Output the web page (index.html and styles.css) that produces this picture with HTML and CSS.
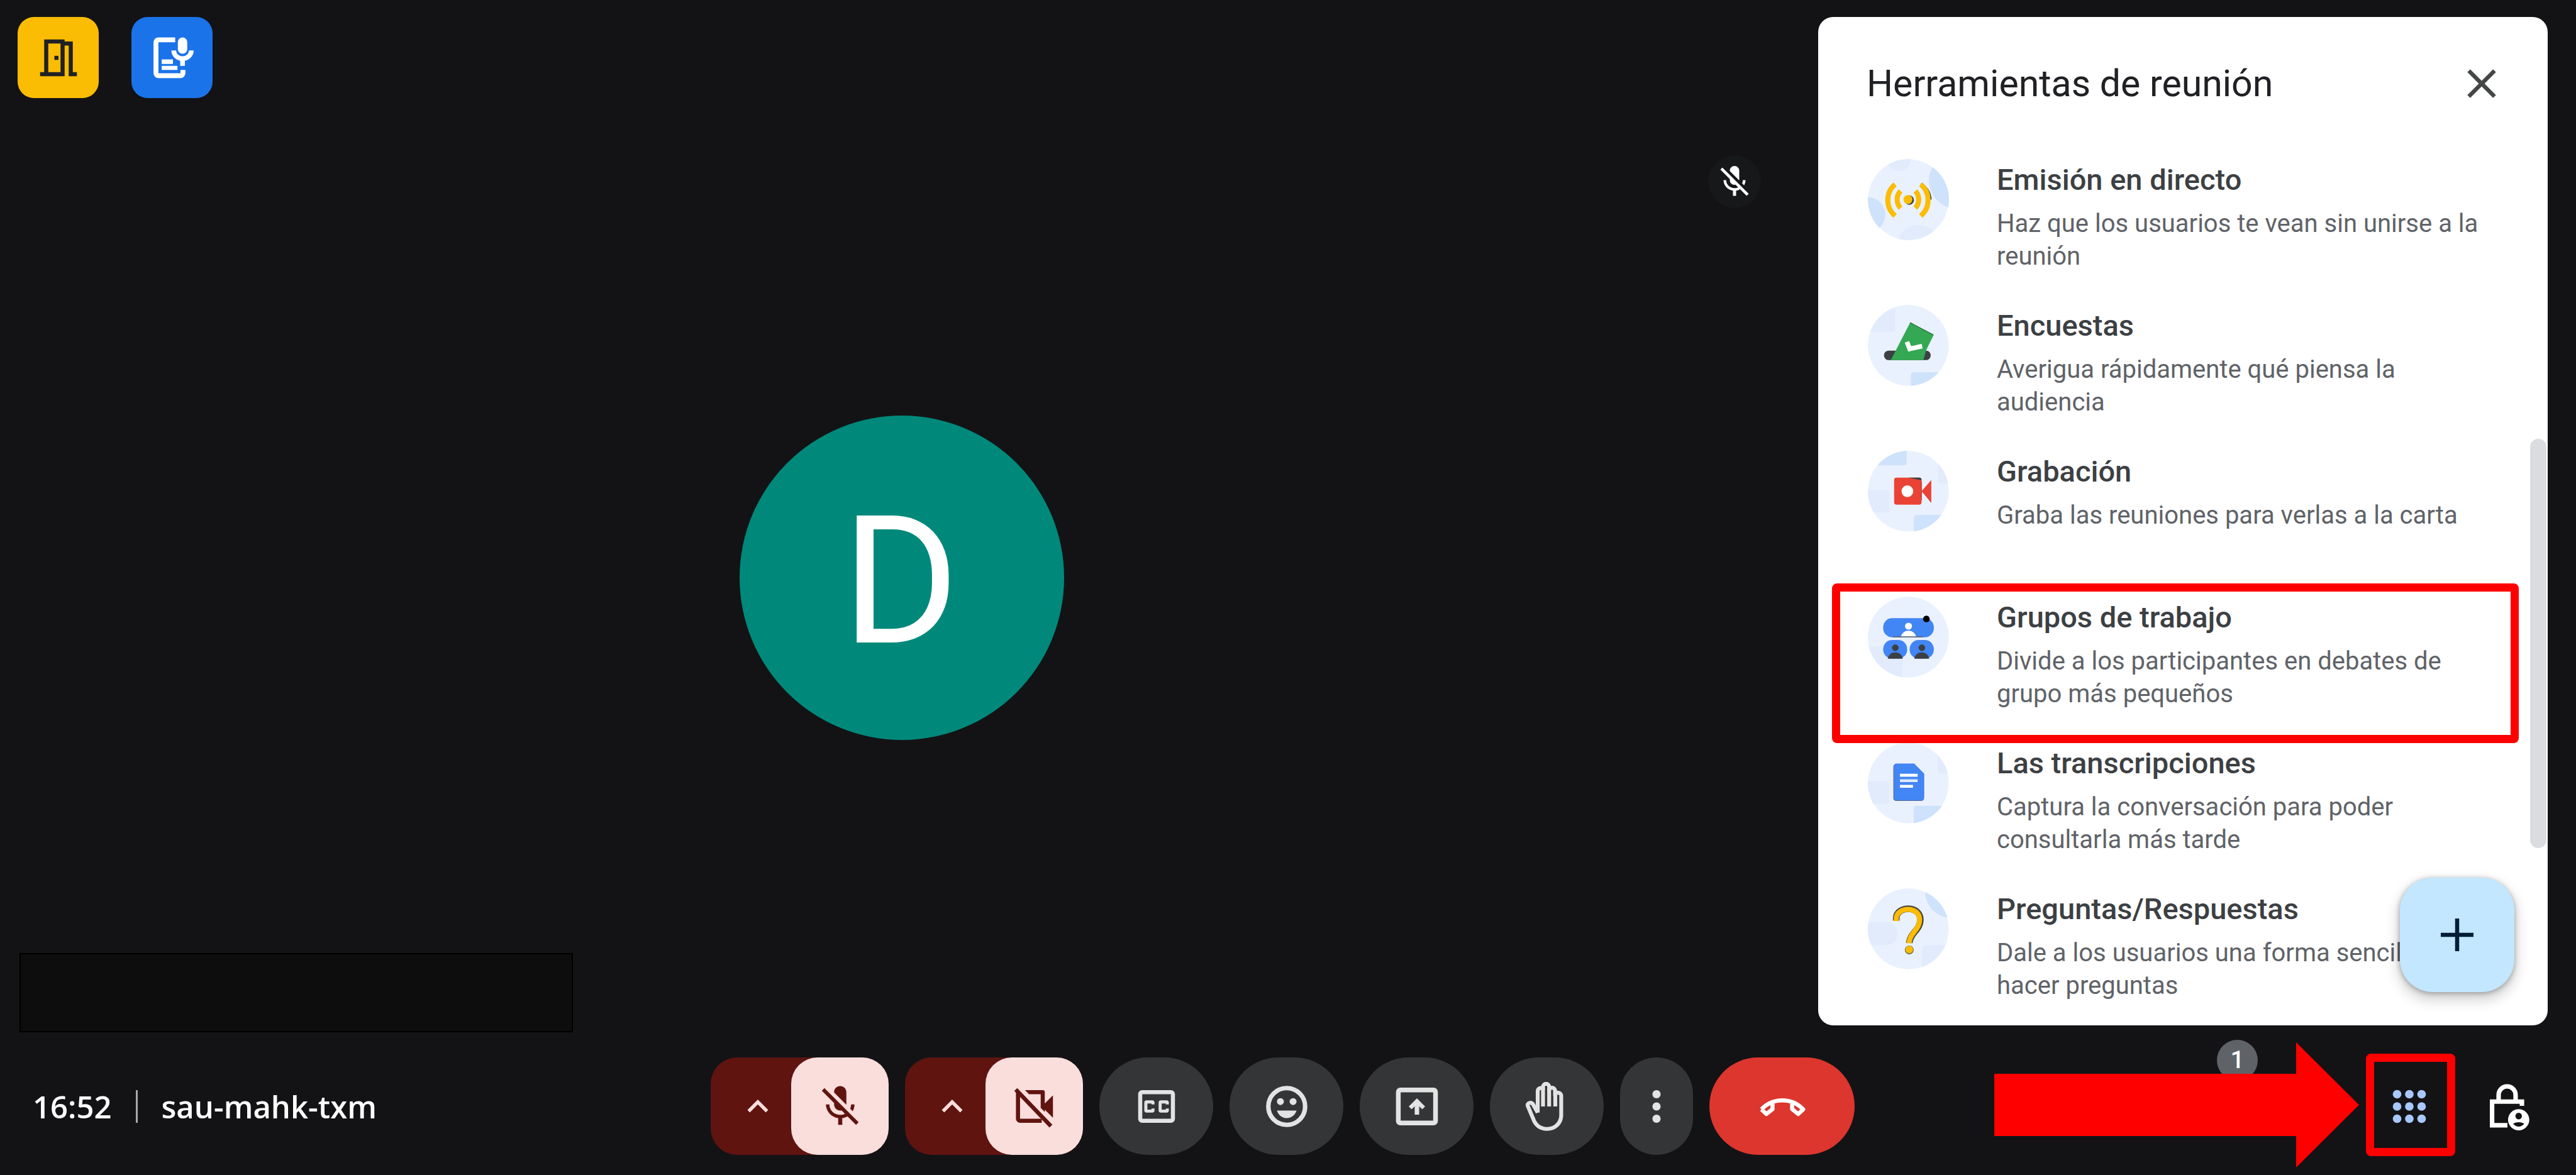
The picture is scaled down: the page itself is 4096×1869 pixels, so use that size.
FILE: index.html
```html
<!DOCTYPE html>
<html lang="es">
<head>
<meta charset="utf-8">
<meta name="viewport" content="width=device-width, initial-scale=1">
<title>sau-mahk-txm</title>
<link rel="stylesheet" href="styles.css">
</head>
<body>
<div class="meeting">
  <main class="main">
    <section class="stage">
      <div class="stage-tools">
        <button class="chip chip-rooms" type="button" aria-label="Grupos">
          <svg class="icon" viewBox="0 0 24 24"><path fill="currentColor" d="M19 19V4h-4V3H5v16H3v2h12V6h2v15h4v-2h-2zm-6 0H7V5h6v14zm-3-8h2v2h-2z"/></svg>
        </button>
        <button class="chip chip-notes" type="button" aria-label="Transcribir">
          <svg class="icon" viewBox="0 0 24 24"><path fill="none" stroke="currentColor" stroke-width="2.4" d="M13.4 3.2H5.2a1.2 1.2 0 0 0-1.2 1.2v15.1a1.2 1.2 0 0 0 1.2 1.2h10.800a1.200 1.200 0 0 0 1.200-1.200V17.900"/><rect x="14.700" y="2" width="4.600" height="8" rx="2.300" fill="currentColor"/><path fill="none" stroke="currentColor" stroke-width="2.300" d="M12.700 8.400a4.300 4 0 0 0 8.600 0M17 12.400v3.500"/><path fill="currentColor" d="M6.800 12.800h5.500V15H6.800zM6.800 15.900h7.700v2H6.800z"/></svg>
        </button>
      </div>
      <div class="tile">
        <div class="avatar">D</div>
        <span class="tile-mic">
          <svg viewBox="0 0 24 24"><path fill="currentColor" d="M19 11h-1.700c0 .74-.16 1.430-.43 2.050l1.230 1.230c.56-.98.9-2.090.9-3.280zm-4.020.17c0-.06.02-.11.02-.17V5c0-1.660-1.340-3-3-3S9 3.340 9 5v.18l5.980 5.990zM4.270 3L3 4.270l6.010 6.010V11c0 1.660 1.330 3 2.990 3 .22 0 .44-.03.650-.08l1.660 1.660c-.71.33-1.500.52-2.310.52-2.760 0-5.300-2.100-5.300-5.100H5c0 3.410 2.720 6.230 6 6.720V21h2v-3.280c.91-.13 1.770-.45 2.540-.9L19.730 21 21 19.730 4.270 3z"/></svg>
        </span>
        <div class="name-mask"></div>
      </div>
    </section>

    <aside class="panel">
      <header class="panel-head">
        <h1>Herramientas de reunión</h1>
        <button class="close" type="button" aria-label="Cerrar">
          <svg class="icon" viewBox="0 0 24 24"><path fill="currentColor" d="M19 6.410L17.590 5 12 10.590 6.410 5 5 6.410 10.590 12 5 17.590 6.410 19 12 13.410 17.590 19 19 17.590 13.410 12z"/></svg>
        </button>
      </header>
      <ul class="tools">
        <li class="tool">
          <svg class="tool-icon" viewBox="0 0 417 417">
            <circle cx="208" cy="208" r="208" fill="#eaf1fe"/>
            <g class="blobs"><circle cx="159" cy="0" r="62" fill="#e1ebfc"/><circle cx="460" cy="110" r="146" fill="#cfe2fb"/><circle cx="0" cy="286" r="90" fill="#cfe2fb"/><circle cx="259" cy="446" r="108" fill="#e1ebfc"/></g>
            <circle cx="213" cy="211" r="24" fill="#3c4043"/><path d="M273 128A103 103 0 0 1 322 208" fill="none" stroke="#3c4043" stroke-width="12"/>
            <g fill="none" stroke="#fbbc04" stroke-width="26"><path d="M140 130a106 106 0 0 0 0 162M272 130a106 106 0 0 1 0 162M168 164a64 64 0 0 0 0 88M244 164a64 64 0 0 1 0 88"/></g>
            <circle cx="206" cy="208" r="23" fill="#fbbc04"/>
          </svg>
          <div class="tool-text"><h2>Emisión en directo</h2><p>Haz que los usuarios te vean sin unirse a la reunión</p></div>
        </li>
        <li class="tool">
          <svg class="tool-icon" viewBox="0 0 417 417">
            <circle cx="208" cy="208" r="208" fill="#eaf1fe"/>
            <g class="blobs"><rect x="-20" y="-20" width="160" height="158" rx="14" fill="#e1ebfc"/><rect x="221" y="346" width="220" height="120" rx="14" fill="#cfe2fb"/></g>
            <rect x="83" y="235" width="240" height="49" rx="24" fill="#3c4043"/>
            <path d="M218 90l120 65-37 75-16 54H118z" fill="#34a853"/><path d="M217 91l120 63" stroke="#2a6d3d" stroke-width="4"/>
            <path d="M201 190l14 36 64-14" fill="none" stroke="#fff" stroke-width="24"/>
          </svg>
          <div class="tool-text"><h2>Encuestas</h2><p>Averigua rápidamente qué piensa la audiencia</p></div>
        </li>
        <li class="tool">
          <svg class="tool-icon" viewBox="0 0 417 417">
            <circle cx="208" cy="208" r="208" fill="#eaf1fe"/>
            <g class="blobs"><rect x="-20" y="-20" width="220" height="95" rx="14" fill="#cfe2fb"/><rect x="361" y="30" width="90" height="138" rx="14" fill="#e1ebfc"/><rect x="-20" y="203" width="130" height="115" rx="14" fill="#e1ebfc"/><rect x="236" y="330" width="200" height="120" rx="14" fill="#cfe2fb"/></g>
            <rect x="135" y="138" width="141" height="139" rx="12" fill="#ea4335"/><path d="M208 138h58q10 0 10 14z" fill="#3c4043"/><path d="M326 150v118l-50-60z" fill="#ea4335"/><path d="M276 158v96" stroke="#a03a34" stroke-width="3"/>
            <circle cx="203" cy="208" r="30" fill="#fff"/>
          </svg>
          <div class="tool-text"><h2>Grabación</h2><p>Graba las reuniones para verlas a la carta</p></div>
        </li>
        <li class="tool tool-marked">
          <svg class="tool-icon" viewBox="0 0 417 417">
            <circle cx="208" cy="208" r="208" fill="#eaf1fe"/>
            <g class="blobs"><rect x="-20" y="257" width="198" height="200" fill="#e1ebfc"/></g>
            <rect x="79" y="111" width="260" height="98" rx="46" fill="#4285f4"/><rect x="79" y="223" width="123" height="96" rx="46" fill="#4285f4"/><rect x="215" y="223" width="124" height="96" rx="46" fill="#4285f4"/>
            <circle cx="209" cy="152" r="18" fill="#fff"/><path d="M170 206q8-31 39-31t39 31z" fill="#fff"/><path d="M128 207h155" stroke="#5f6368" stroke-width="5"/>
            <g fill="#3c4043"><circle cx="141" cy="263" r="17"/><path d="M102 319q8-32 39-32t39 32z"/><circle cx="278" cy="263" r="17"/><path d="M238 319q8-32 39-32t39 32z"/></g>
            <circle cx="301" cy="115" r="17" fill="#000"/>
          </svg>
          <div class="tool-text"><h2>Grupos de trabajo</h2><p>Divide a los participantes en debates de grupo más pequeños</p></div>
        </li>
        <li class="tool">
          <svg class="tool-icon" viewBox="0 0 417 417">
            <circle cx="208" cy="208" r="208" fill="#eaf1fe"/>
            <g class="blobs"><rect x="359" y="20" width="90" height="141" rx="14" fill="#e1ebfc"/><rect x="-20" y="198" width="130" height="120" rx="14" fill="#e1ebfc"/><rect x="236" y="326" width="200" height="130" rx="14" fill="#cfe2fb"/></g>
            <path d="M147 111h91l51 52v122q0 16-16 16H147q-16 0-16-16V127q0-16 16-16z" fill="#5c6f94"/><path d="M149 108h89l51 52v122q0 15-15 15H149q-15 0-15-15V123q0-15 15-15z" fill="#4285f4"/>
            <path d="M165 161h91v15h-91zM165 218h67v15h-67z" fill="#fff"/><path d="M165 189h91v15h-91z" fill="#dce8fd"/>
          </svg>
          <div class="tool-text"><h2>Las transcripciones</h2><p>Captura la conversación para poder consultarla más tarde</p></div>
        </li>
        <li class="tool">
          <svg class="tool-icon" viewBox="0 0 417 417">
            <circle cx="208" cy="208" r="208" fill="#eaf1fe"/>
            <g class="blobs"><circle cx="426" cy="20" r="131" fill="#cfe2fb"/><rect x="-60" y="173" width="213" height="120" rx="60" fill="#e1ebfc"/><rect x="278" y="292" width="150" height="150" rx="20" fill="#e1ebfc"/></g>
            <g fill="none" stroke="#4b4a3c" stroke-width="34"><path d="M146 166v-12c0-64 124-70 124 8 0 52-54 68-57 119"/></g><circle cx="213" cy="317" r="23" fill="#80754c"/>
            <g fill="none" stroke="#fbbc04" stroke-width="26"><path d="M146 168v-12c0-62 120-68 120 6 0 52-53 68-54 121"/></g><circle cx="213" cy="315" r="19" fill="#fbbc04"/>
          </svg>
          <div class="tool-text"><h2>Preguntas/Respuestas</h2><p>Dale a los usuarios una forma sencilla de hacer preguntas</p></div>
        </li>
      </ul>
      <div class="scroll-thumb"></div>
      <button class="fab" type="button" aria-label="Añadir">
        <svg class="icon" viewBox="0 0 24 24"><path fill="currentColor" d="M20 13h-7v7h-2v-7H4v-2h7V4h2v7h7z"/></svg>
      </button>
    </aside>
  </main>

  <footer class="bar">
    <div class="info"><time>16:52</time><span class="divider"></span><span>sau-mahk-txm</span></div>
    <div class="controls">
      <div class="split">
        <button class="split-menu" type="button" aria-label="Ajustes de audio"><svg class="chevron" viewBox="0 0 24 24"><path fill="currentColor" d="M7.410 15.410L12 10.830l4.590 4.580L18 14l-6-6-6 6z"/></svg></button>
        <button class="split-main" type="button" aria-label="Activar micrófono"><svg class="icon" viewBox="0 0 24 24"><path fill="currentColor" d="M19 11h-1.700c0 .74-.16 1.430-.43 2.050l1.230 1.230c.56-.98.9-2.090.9-3.280zm-4.020.17c0-.06.02-.11.02-.17V5c0-1.660-1.340-3-3-3S9 3.340 9 5v.18l5.980 5.990zM4.270 3L3 4.270l6.010 6.010V11c0 1.660 1.330 3 2.990 3 .22 0 .44-.03.650-.08l1.660 1.660c-.71.33-1.500.52-2.310.52-2.760 0-5.300-2.100-5.300-5.100H5c0 3.410 2.720 6.230 6 6.720V21h2v-3.280c.91-.13 1.770-.45 2.540-.9L19.730 21 21 19.730 4.270 3z"/></svg></button>
      </div>
      <div class="split">
        <button class="split-menu" type="button" aria-label="Ajustes de vídeo"><svg class="chevron" viewBox="0 0 24 24"><path fill="currentColor" d="M7.410 15.410L12 10.830l4.590 4.580L18 14l-6-6-6 6z"/></svg></button>
        <button class="split-main" type="button" aria-label="Activar cámara"><svg class="icon" viewBox="0 0 24 24"><path fill="currentColor" d="M7.300 4H16a1 1 0 0 1 1 1v5.500l4-4v11l-4-4v1.200l-2-2V6H9.300z"/><path fill="none" stroke="currentColor" stroke-width="2" d="M3.900 4.500V18a1 1 0 0 0 1 1H15.500"/><path fill="none" stroke="currentColor" stroke-width="2" d="M2.800 3.700L20 21.600"/></svg></button>
      </div>
      <button class="round" type="button" aria-label="Subtítulos"><svg class="icon" viewBox="0 0 24 24"><path fill="currentColor" d="M19 4H5c-1.110 0-2 .9-2 2v12c0 1.100.89 2 2 2h14c1.100 0 2-.9 2-2V6c0-1.100-.9-2-2-2zm0 14H5V6h14v12zM7 15h3c.55 0 1-.45 1-1v-1H9.500v.5h-2v-3h2v.5H11v-1c0-.55-.45-1-1-1H7c-.55 0-1 .45-1 1v4c0 .55.45 1 1 1zm7 0h3c.55 0 1-.45 1-1v-1h-1.500v.5h-2v-3h2v.5H18v-1c0-.55-.45-1-1-1h-3c-.55 0-1 .45-1 1v4c0 .55.45 1 1 1z"/></svg></button>
      <button class="round" type="button" aria-label="Reacciones"><svg class="icon" viewBox="0 0 24 24"><circle cx="12" cy="12" r="9" fill="none" stroke="currentColor" stroke-width="2.200"/><circle cx="8.900" cy="9.600" r="1.700" fill="currentColor"/><circle cx="15.100" cy="9.600" r="1.700" fill="currentColor"/><path fill="currentColor" d="M7.200 14h9.600c-.7 2.200-2.600 3.700-4.800 3.700S7.900 16.200 7.200 14z"/></svg></button>
      <button class="round" type="button" aria-label="Presentar"><svg class="icon" viewBox="0 0 24 24"><rect x="2.900" y="3.900" width="18.200" height="16.200" rx="1" fill="none" stroke="currentColor" stroke-width="2.300"/><path fill="currentColor" d="M12 8l4 4-1.400 1.400-1.500-1.500V16h-2.200v-4.100l-1.500 1.500L8 12z"/></svg></button>
      <button class="round" type="button" aria-label="Levantar la mano"><svg class="icon" viewBox="0 0 24 24"><g fill="none" stroke="currentColor" stroke-width="1.900" stroke-linejoin="round"><path d="M7.400 15V4.300a1.500 1.500 0 0 1 2.600-.8V2.400a1.500 1.500 0 0 1 3 0v1.400a1.500 1.500 0 0 1 2.900.6v2.200a1.500 1.500 0 0 1 3 .3v9.300c0 4-3 6.800-6.900 6.800-3.600 0-5.800-2-6.900-5.200L2.500 11.600c-.4-1.200 1.700-2.100 2.600-.7L7.400 15"/><path d="M10 3v9M13 3v9M16 5v7"/></g></svg></button>
      <button class="round round-more" type="button" aria-label="Más opciones"><svg class="icon" viewBox="0 0 24 24"><path fill="currentColor" d="M12 8c1.100 0 2-.9 2-2s-.9-2-2-2-2 .9-2 2 .9 2 2 2zm0 2c-1.100 0-2 .9-2 2s.9 2 2 2 2-.9 2-2-.9-2-2-2zm0 6c-1.100 0-2 .9-2 2s.9 2 2 2 2-.9 2-2-.9-2-2-2z"/></svg></button>
      <button class="round round-leave" type="button" aria-label="Salir de la llamada"><svg class="icon" viewBox="0 0 24 24"><path fill="none" stroke="currentColor" stroke-width="2" stroke-linejoin="round" d="M1.800 13.400Q6 9 12 9t10.200 4.400l-2.400 2.300-3-2.400V10M7.200 10v3.300l-3 2.400-2.400-2.300"/></svg></button>
    </div>
    <div class="side">
      <button class="side-button" type="button" aria-label="Personas"><span class="badge">1</span></button>
      <span class="gap"></span>
      <span class="apps-wrap">
        <svg class="arrow" viewBox="0 0 580 199"><path fill="#f00" d="M0 50h480V0l100 99.500L480 199v-50H0z"/></svg>
        <button class="side-button apps" type="button" aria-label="Herramientas de reunión"><svg class="icon" viewBox="0 0 24 24"><g fill="currentColor"><circle cx="6" cy="6" r="2.100"/><circle cx="12" cy="6" r="2.100"/><circle cx="18" cy="6" r="2.100"/><circle cx="6" cy="12" r="2.100"/><circle cx="12" cy="12" r="2.100"/><circle cx="18" cy="12" r="2.100"/><circle cx="6" cy="18" r="2.100"/><circle cx="12" cy="18" r="2.100"/><circle cx="18" cy="18" r="2.100"/></g></svg></button>
      </span>
      <button class="side-button" type="button" aria-label="Controles del organizador"><svg class="icon" viewBox="0 0 24 24"><path fill="none" stroke="currentColor" stroke-width="2.200" d="M8.300 9.500V6.300a4.150 4.150 0 0 1 8.300 0v3.200M19.700 11.700V9.600H5.100v11.600h7.500"/><path fill="currentColor" fill-rule="evenodd" d="M18.100 13.300a5.200 5.200 0 1 1 0 10.400 5.200 5.200 0 0 1 0-10.400zm0 1.800a1.600 1.600 0 1 0 0 3.200 1.600 1.600 0 0 0 0-3.200zm-2.700 5.300a3.200 3.200 0 0 0 5.400 0 6 6 0 0 0-5.400 0z"/></svg></button>
    </div>
  </footer>
</div>
</body>
</html>
```
FILE: styles.css
```css
*,
*::after {
  box-sizing: border-box;
}

body {
  margin: 0;
  background: #131315;
  color: #fff;
  font-family: Roboto, "Liberation Sans", sans-serif;
}

button {
  display: grid;
  place-items: center;
  margin: 0;
  padding: 0;
  border: 0;
  background: none;
  color: inherit;
  font: inherit;
}

h1,
h2,
p,
ul {
  margin: 0;
  padding: 0;
}

svg {
  display: block;
}

.icon {
  width: 78px;
  height: 78px;
}

.meeting {
  display: grid;
  grid-template-rows: minmax(0, 1fr) auto;
  gap: 51px;
  height: 100vh;
  padding: 27px 0 32px;
  overflow: hidden;
}

.main {
  display: grid;
  grid-template-columns: minmax(0, 1fr) 1160px;
  gap: 51px;
  padding: 0 45px 0 28px;
}

/* Video stage */
.stage {
  display: grid;
  grid-template-rows: auto 1fr;
  gap: 51px;
}

.stage-tools {
  display: flex;
  gap: 52px;
}

.chip {
  width: 129px;
  height: 129px;
  border-radius: 26px;
}

.chip-rooms {
  background: #fbbc04;
  color: #202124;
}

.chip-notes {
  background: #1a73e8;
}

.tile {
  position: relative;
  display: grid;
  place-items: center;
}

.avatar {
  display: grid;
  place-items: center;
  width: 516px;
  height: 516px;
  padding: 12px 4px 0 0;
  border-radius: 50%;
  background: #00897b;
  font-size: 284px;
  line-height: 1;
}

.tile-mic {
  position: absolute;
  top: 40px;
  right: 40px;
  display: grid;
  place-items: center;
  width: 84px;
  height: 84px;
  border-radius: 50%;
  background: #17181a;
}

.tile-mic svg {
  width: 60px;
  height: 60px;
}

.name-mask {
  position: absolute;
  left: 3px;
  bottom: -11px;
  width: 880px;
  height: 126px;
  border: 2px solid #000;
  background: #0d0d0d;
}

/* Tools panel */
.panel {
  position: relative;
  display: flex;
  flex-direction: column;
  min-height: 0;
  border-radius: 24px;
  background: #fff;
  color: #202124;
  overflow: hidden;
}

.panel-head {
  display: flex;
  align-items: center;
  justify-content: space-between;
  padding: 66px 66px 80px 77px;
}

.panel-head h1 {
  font-size: 59px;
  line-height: 80px;
  font-weight: 400;
}

.close {
  color: #444746;
}

.tools {
  flex: 1;
  min-height: 0;
  list-style: none;
  overflow: hidden;
}

.tool {
  display: flex;
  gap: 76px;
  height: 232px;
  padding: 0 79px;
}

.tool-icon {
  flex: none;
  width: 129px;
  height: 129px;
  border-radius: 50%;
}

.tool-text {
  flex: 1;
  padding-top: 5px;
}

.tool h2 {
  margin-bottom: 16px;
  color: #3c4043;
  font-size: 47px;
  line-height: 56px;
  font-weight: 500;
}

.tool p {
  color: #5f6368;
  font-size: 40px;
  line-height: 52px;
}

.tool-marked {
  position: relative;
}

.tool-marked::after {
  content: "";
  position: absolute;
  top: -21px;
  left: 22px;
  right: 46px;
  height: 254px;
  border: 13px solid #f00;
  border-radius: 8px;
}

.scroll-thumb {
  position: absolute;
  top: 671px;
  right: 2px;
  width: 26px;
  height: 651px;
  border-radius: 13px;
  background: #dadce0;
}

.fab {
  position: absolute;
  right: 53px;
  bottom: 53px;
  width: 182px;
  height: 182px;
  border-radius: 52px;
  background: #c2e7ff;
  color: #001d35;
  box-shadow: 0 10px 20px 4px rgba(0, 0, 0, 0.16), 0 2px 8px rgba(0, 0, 0, 0.3);
}

/* Bottom bar */
.bar {
  display: grid;
  grid-template-columns: 1fr auto 1fr;
  align-items: center;
  padding: 0 49px 0 32px;
}

.info {
  display: flex;
  align-items: center;
  gap: 38px;
  padding-left: 20px;
  font-family: "Open Sans", Roboto, sans-serif;
  font-size: 49px;
  line-height: 60px;
  font-weight: 600;
}

.divider {
  width: 3px;
  height: 52px;
  background: #a8a9ab;
}

.controls {
  display: flex;
  gap: 26px;
}

.split {
  display: flex;
  width: 283px;
  height: 155px;
  border-radius: 42px;
  background: #5f1410;
  color: #f9dedc;
}

.split-menu {
  flex: 1;
  padding-left: 22px;
}

.chevron {
  width: 66px;
  height: 66px;
}

.split-main {
  width: 155px;
  height: 155px;
  border-radius: 42px;
  background: #f9dedc;
  color: #60140f;
}

.round {
  width: 181px;
  height: 155px;
  border-radius: 78px;
  background: #333537;
  color: #e3e3e3;
}

.round-more {
  width: 116px;
  border-radius: 58px;
}

.round-leave {
  width: 231px;
  background: #dc362e;
  color: #fff;
}

.side {
  display: flex;
  justify-content: flex-end;
  gap: 30px;
}

.side-button {
  position: relative;
  width: 124px;
  height: 124px;
}

.gap {
  width: 124px;
}

.badge {
  position: absolute;
  top: -44px;
  right: -5px;
  width: 65px;
  height: 65px;
  border-radius: 50%;
  background: #5f6368;
  font-size: 38px;
  line-height: 65px;
  font-weight: 500;
  text-align: center;
}

.apps-wrap {
  position: relative;
  color: #a8c7fa;
}

.apps-wrap::after {
  content: "";
  position: absolute;
  inset: -22px -11px -17px -7px;
  border: 13px solid #f00;
  border-radius: 8px;
}

.arrow {
  position: absolute;
  top: -40px;
  right: calc(100% + 18px);
  width: 580px;
  height: 199px;
}
```
